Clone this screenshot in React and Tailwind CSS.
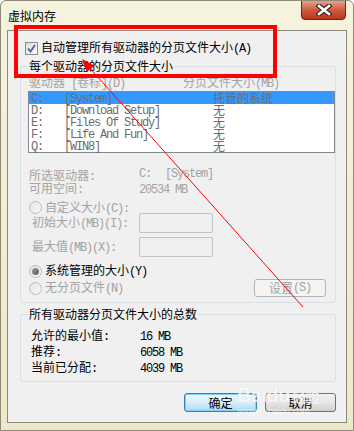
import React from 'react';

const MONO = "font-['Liberation_Mono',monospace] text-[12px] tracking-[-1.2px] whitespace-pre";

// SimSun-like mix: latin runs get a narrow mono face, CJK stays 12px
function Txt({children}) {
    const parts = String(children).split(/([\x00-\x7f]+)/).filter(Boolean);
    return (
        <>
            {parts.map((p, i) =>
                /^[\x00-\x7f]+$/.test(p)
                    ? <span key={i} className={MONO}>{p}</span>
                    : <span key={i}>{p}</span>
            )}
        </>
    );
}

function Radio({checked}) {
    return (
        <span className="w-[13px] h-[13px] rounded-full border border-[#bcbcbc] bg-gradient-to-br from-[#e2e2e2] to-[#fbfbfb] flex items-center justify-center shrink-0">
            {checked && <span className="w-[7px] h-[7px] rounded-full bg-gradient-to-br from-[#9a9a9a] to-[#5c5c5c]"/>}
        </span>
    );
}

function Input() {
    return <div className="w-[74px] h-[20px] border border-[#c2c2c2] rounded-[2px] bg-[#f0f0f0]"/>;
}

const drives = [
    ['C:', '[System]', '托管的系统'],
    ['D:', '[Download Setup]', '无'],
    ['E:', '[Files Of Study]', '无'],
    ['F:', '[Life And Fun]', '无'],
    ['Q:', '[WIN8]', '无'],
];

export default function App() {
    return (
        <div className="relative w-[354px] h-[431px] overflow-hidden bg-gradient-to-b from-[#f6f3de] to-[#ede8c8] border border-[#8d8a76] rounded-t-[6px] font-['Noto_Sans_CJK_SC',sans-serif] text-[12px] leading-[14px] text-black">
            {/* title bar */}
            <div className="h-[29px] flex items-start justify-between">
                <span className="pl-[7px] pt-[8px] text-[12px] leading-[14px]">虚拟内存</span>
                <div className="mr-[7px] -mt-[1px] w-[45px] h-[20px] rounded-b-[4px] border border-[#6e2417] bg-gradient-to-b from-[#e6a08e] via-[#cf5a3d] to-[#b8361c] flex items-center justify-center">
                    <svg width="16" height="12" viewBox="0 0 16 12">
                        <path d="M3 2 L13 10 M13 2 L3 10" stroke="#3d2a26" strokeWidth="5" strokeLinecap="square"/>
                        <path d="M3 2 L13 10 M13 2 L3 10" stroke="#ffffff" strokeWidth="2.6" strokeLinecap="square"/>
                    </svg>
                </div>
            </div>

            {/* client area */}
            <div className="ml-[6px] w-[340px] h-[393px] border border-[#8c8a7e] bg-[#f0f0f0] flex flex-col">
                <div className="mt-[10px] ml-[17px] h-[14px] flex items-center gap-[3px]">
                    <span className="w-[13px] h-[13px] border border-[#8e8f8f] bg-gradient-to-br from-[#dcdcdc] to-[#fafafa] flex items-center justify-center">
                        <svg width="9" height="9" viewBox="0 0 9 9">
                            <path d="M1 4.5 L3.5 7.5 L8 1" stroke="#4b5ea8" strokeWidth="1.8" fill="none"/>
                        </svg>
                    </span>
                    <span><Txt>自动管理所有驱动器的分页文件大小(A)</Txt></span>
                </div>

                <fieldset className="mt-[4px] ml-[12px] w-[316px] border border-[#d5dfe5] rounded-[3px] pb-[5px] flex flex-col">
                    <legend className="ml-[7px] px-[1px] leading-[14px]">每个驱动器的分页文件大小</legend>

                    <div className="mt-[2px] ml-[8px] h-[14px] flex text-[#a3a3a3]">
                        <span className="w-[154px]"><Txt>驱动器 [卷标](D)</Txt></span>
                        <span><Txt>分页文件大小(MB)</Txt></span>
                    </div>

                    <div className="mt-[2px] ml-[7px] w-[307px] border border-[#828790] bg-white text-[#6d6d6d]">
                        {drives.map((d, i) => (
                            <div key={d[0]} className={`h-[12px] leading-[12px] flex items-center pl-[2px] ${i === 0 ? 'bg-[#3399ff]' : ''}`}>
                                <span className="w-[33px]"><Txt>{d[0]}</Txt></span>
                                <span className="w-[149px]"><Txt>{d[1]}</Txt></span>
                                <span>{d[2]}</span>
                            </div>
                        ))}
                    </div>

                    <div className="mt-[15px] ml-[8px] flex flex-col text-[#a3a3a3] leading-[13px]">
                        <div className="h-[13px] flex">
                            <span className="w-[110px]"><Txt>所选驱动器:</Txt></span>
                            <span className="flex gap-[14px]"><Txt>C:</Txt><Txt>[System]</Txt></span>
                        </div>
                        <div className="h-[13px] flex">
                            <span className="w-[110px]"><Txt>可用空间:</Txt></span>
                            <span><Txt>20534 MB</Txt></span>
                        </div>
                    </div>

                    <div className="mt-[8px] ml-[8px] h-[11px] flex items-center gap-[3px] text-[#a3a3a3]">
                        <Radio/>
                        <span><Txt>自定义大小(C):</Txt></span>
                    </div>
                    <div className="ml-[11px] h-[20px] flex items-center text-[#a3a3a3]">
                        <span className="w-[107px]"><Txt>初始大小(MB)(I):</Txt></span>
                        <Input/>
                    </div>
                    <div className="mt-[4px] ml-[11px] h-[20px] flex items-center text-[#a3a3a3]">
                        <span className="w-[107px]"><Txt>最大值(MB)(X):</Txt></span>
                        <Input/>
                    </div>

                    <div className="mt-[8px] ml-[8px] h-[12px] flex items-center gap-[3px]">
                        <Radio checked/>
                        <span><Txt>系统管理的大小(Y)</Txt></span>
                    </div>
                    <div className="mt-[2px] ml-[8px] mr-[9px] h-[18px] flex items-center">
                        <div className="flex items-center gap-[3px] text-[#a3a3a3]">
                            <Radio/>
                            <span><Txt>无分页文件(N)</Txt></span>
                        </div>
                        <div className="ml-auto w-[72px] h-[18px] rounded-[3px] border border-[#b0b4b6] bg-[#f4f4f4] flex items-center justify-center text-[#a3a3a3]">
                            <Txt>设置(S)</Txt>
                        </div>
                    </div>
                </fieldset>

                <fieldset className="mt-[4px] ml-[12px] w-[316px] border border-[#d5dfe5] rounded-[3px] pb-[6px] flex flex-col">
                    <legend className="ml-[7px] px-[1px] leading-[14px]">所有驱动器分页文件大小的总数</legend>
                    <div className="mt-[6px] ml-[10px] flex flex-col leading-[16px]">
                        {[['允许的最小值:', '16 MB'], ['推荐:', '6058 MB'], ['当前已分配:', '4039 MB']].map(r => (
                            <div key={r[0]} className="h-[16px] flex">
                                <span className="w-[109px]"><Txt>{r[0]}</Txt></span>
                                <span><Txt>{r[1]}</Txt></span>
                            </div>
                        ))}
                    </div>
                </fieldset>

                <div className="mt-[11px] mr-[10px] flex justify-end gap-[8px]">
                    <div className="w-[73px] h-[19px] rounded-[3px] border border-[#3c7fb1] bg-gradient-to-b from-[#eaf6fd] via-[#d9f0fc] to-[#a7d9f5] shadow-[inset_0_0_0_1px_#7fd0f5] flex items-center justify-center">
                        确定
                    </div>
                    <div className="w-[71px] h-[19px] rounded-[3px] border border-[#707070] bg-gradient-to-b from-[#f2f2f2] via-[#e6e6e6] to-[#cfcfcf] flex items-center justify-center">
                        取消
                    </div>
                </div>
            </div>

            {/* watermark */}
            <div className="absolute left-[236px] top-[384px] pointer-events-none flex flex-col items-start opacity-80">
                <span className="font-['Liberation_Sans',sans-serif] font-bold text-[20px] leading-[20px] text-white/90 tracking-[-0.5px] [text-shadow:0_0_1px_#c8c8c8]">Baidu<span className="text-[14px] ml-[2px] font-['Noto_Sans_CJK_SC',sans-serif]">经验</span></span>
                <span className="font-['Liberation_Sans',sans-serif] text-[9px] leading-[10px] text-white/80">jingyan.baidu.com</span>
            </div>

            {/* red annotation */}
            <svg className="absolute left-0 top-0 pointer-events-none" width="354" height="431" viewBox="0 0 354 431">
                <rect x="15" y="26" width="259" height="49" fill="none" stroke="#ff0000" strokeWidth="4"/>
                <line x1="302" y1="306" x2="87" y2="65" stroke="#ff0000" strokeWidth="1"/>
                <polygon points="81,58 85.9,71 93.3,64.4" fill="#ff0000"/>
            </svg>
        </div>
    );
}
